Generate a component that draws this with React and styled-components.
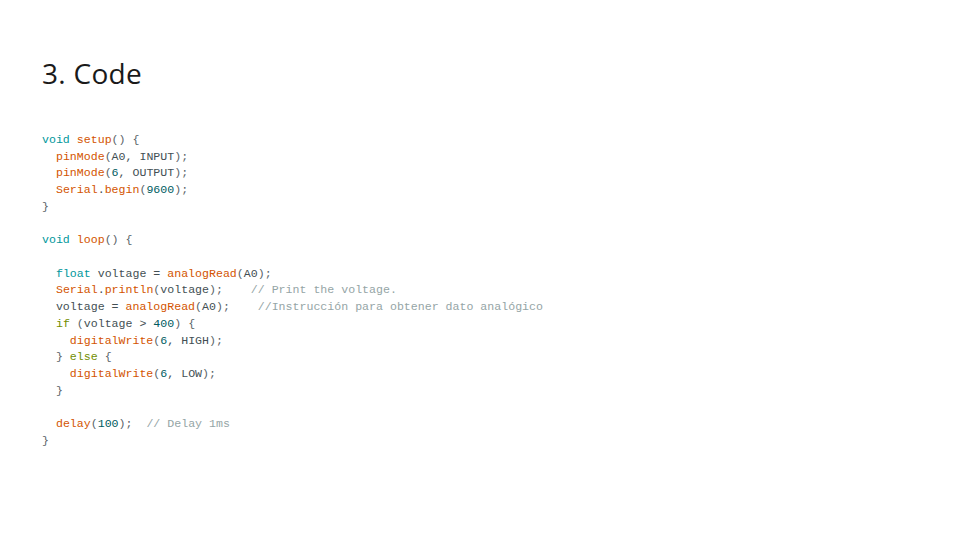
import styled, { createGlobalStyle } from 'styled-components';

const GlobalStyle = createGlobalStyle`
  html, body {
    margin: 0;
    padding: 0;
    background: #ffffff;
  }
`;

const code = [
  [['k', 'void'], ['t', ' '], ['f', 'setup'], ['p', '() {']],
  [['t', '  '], ['f', 'pinMode'], ['p', '('], ['t', 'A0, INPUT'], ['p', ');']],
  [['t', '  '], ['f', 'pinMode'], ['p', '('], ['n', '6'], ['t', ', OUTPUT'], ['p', ');']],
  [['t', '  '], ['f', 'Serial'], ['t', '.'], ['f', 'begin'], ['p', '('], ['n', '9600'], ['p', ');']],
  [['p', '}']],
  [],
  [['k', 'void'], ['t', ' '], ['f', 'loop'], ['p', '() {']],
  [],
  [['t', '  '], ['k', 'float'], ['t', ' voltage = '], ['f', 'analogRead'], ['p', '('], ['t', 'A0'], ['p', ');']],
  [['t', '  '], ['f', 'Serial'], ['t', '.'], ['f', 'println'], ['p', '('], ['t', 'voltage'], ['p', ');'], ['t', '    '], ['c', '// Print the voltage.']],
  [['t', '  voltage = '], ['f', 'analogRead'], ['p', '('], ['t', 'A0'], ['p', ');'], ['t', '    '], ['c', '//Instrucción para obtener dato analógico']],
  [['t', '  '], ['s', 'if'], ['t', ' '], ['p', '('], ['t', 'voltage > '], ['n', '400'], ['p', ') {']],
  [['t', '    '], ['f', 'digitalWrite'], ['p', '('], ['n', '6'], ['t', ', HIGH'], ['p', ');']],
  [['t', '  '], ['p', '}'], ['t', ' '], ['s', 'else'], ['t', ' '], ['p', '{']],
  [['t', '    '], ['f', 'digitalWrite'], ['p', '('], ['n', '6'], ['t', ', LOW'], ['p', ');']],
  [['t', '  '], ['p', '}']],
  [],
  [['t', '  '], ['f', 'delay'], ['p', '('], ['n', '100'], ['p', ');'], ['t', '  '], ['c', '// Delay 1ms']],
  [['p', '}']],
];

export default function App() {
  return (
    <>
      <GlobalStyle />
      <Slide>
        <Title>3. Code</Title>
        <CodeBlock>
          {code.map((line, i) => (
            <Line key={i}>
              {line.length === 0
                ? ' '
                : line.map(([kind, text], j) => (
                    <Token key={j} $kind={kind}>
                      {text}
                    </Token>
                  ))}
            </Line>
          ))}
        </CodeBlock>
      </Slide>
    </>
  );
}

const colors = {
  k: '#00979c',
  f: '#d35400',
  s: '#728e00',
  n: '#005c5f',
  c: '#95a5a6',
  p: '#5a6468',
  t: '#434f54',
};

const Slide = styled.div`
  width: 960px;
  height: 540px;
  box-sizing: border-box;
  padding: 55px 42px 0;
  background: #ffffff;
  overflow: hidden;
`;

const Title = styled.h1`
  margin: 0;
  font-family: 'Open Sans', 'Liberation Sans', sans-serif;
  font-weight: 400;
  font-size: 28px;
  line-height: 36px;
  color: #1a1a1a;
  letter-spacing: 0.3px;
`;

const CodeBlock = styled.pre`
  margin: 41px 0 0;
  font-family: 'Liberation Mono', 'Courier New', monospace;
  font-size: 11.6px;
  line-height: 16.72px;
  color: #434f54;
`;

const Line = styled.div`
  white-space: pre;
  height: 16.72px;
`;

const Token = styled.span`
  color: ${(p) => colors[p.$kind]};
`;
